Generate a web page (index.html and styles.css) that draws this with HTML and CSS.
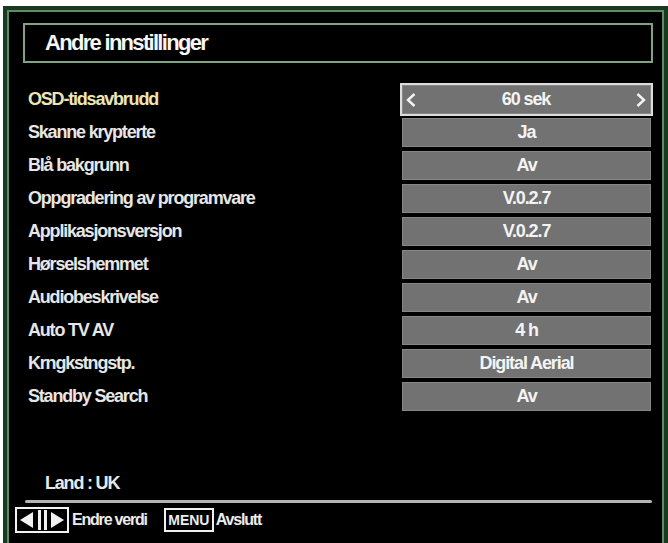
FILE: index.html
```html
<!DOCTYPE html>
<html lang="no">
<head>
<meta charset="utf-8">
<title>Andre innstillinger</title>
<link rel="stylesheet" href="styles.css">
</head>
<body>
<div class="tv">
  <div class="title">Andre innstillinger</div>
  <ul class="list">
    <li class="row sel">
      <span class="label">OSD-tidsavbrudd</span>
      <span class="val">
        <svg class="chev" width="10" height="14" viewBox="0 0 10 14"><polyline points="8.5,1 2,7 8.5,13" fill="none" stroke="#f4f4f4" stroke-width="2.4"/></svg>
        <span class="vtext">60 sek</span>
        <svg class="chev" width="10" height="14" viewBox="0 0 10 14"><polyline points="1.5,1 8,7 1.5,13" fill="none" stroke="#f4f4f4" stroke-width="2.4"/></svg>
      </span>
    </li>
    <li class="row"><span class="label">Skanne krypterte</span><span class="val">Ja</span></li>
    <li class="row"><span class="label">Blå bakgrunn</span><span class="val">Av</span></li>
    <li class="row"><span class="label">Oppgradering av programvare</span><span class="val">V.0.2.7</span></li>
    <li class="row"><span class="label">Applikasjonsversjon</span><span class="val">V.0.2.7</span></li>
    <li class="row"><span class="label">Hørselshemmet</span><span class="val">Av</span></li>
    <li class="row"><span class="label">Audiobeskrivelse</span><span class="val">Av</span></li>
    <li class="row"><span class="label">Auto TV AV</span><span class="val">4 h</span></li>
    <li class="row"><span class="label">Krngkstngstp.</span><span class="val">Digital Aerial</span></li>
    <li class="row"><span class="label">Standby Search</span><span class="val">Av</span></li>
  </ul>
  <div class="land">Land : UK</div>
  <div class="sep"></div>
  <div class="foot">
    <svg class="keys" width="54" height="26" viewBox="0 0 54 26">
      <rect x="1" y="1" width="52" height="24" fill="none" stroke="#f2f2f2" stroke-width="2"/>
      <polygon points="5,13 18,5 18,21" fill="#f2f2f2"/>
      <rect x="23" y="3" width="3" height="20" fill="#f2f2f2"/>
      <rect x="29" y="3" width="3" height="20" fill="#f2f2f2"/>
      <polygon points="49,13 36,5 36,21" fill="#f2f2f2"/>
    </svg>
    <span class="ftext">Endre verdi</span>
    <span class="menu">MENU</span>
    <span class="ftext">Avslutt</span>
  </div>
</div>
</body>
</html>
```
FILE: styles.css
```css
html, body {
  margin: 0;
  padding: 0;
  background: #ffffff;
  overflow: hidden;
}
body {
  width: 668px;
  height: 543px;
  font-family: "Liberation Sans", Arial, sans-serif;
  font-weight: bold;
}
.tv {
  margin: 6px 0 0 3px;
  width: 665px;
  height: 560px;
  box-sizing: border-box;
  background: #000;
  border: 4px solid #1a3a20;
  box-shadow: inset 0 0 0 2px #5c8e62;
  display: flex;
  flex-direction: column;
  align-items: flex-start;
}
.title {
  margin: 13px 0 0 16px;
  width: 630px;
  height: 40px;
  box-sizing: border-box;
  border: 2px solid #7fa383;
  color: #f6f6f6;
  font-size: 22px;
  letter-spacing: -1.7px;
  line-height: 36px;
  padding-left: 20px;
}
.list {
  list-style: none;
  margin: 20px 0 0 0;
  padding: 0;
}
.row {
  height: 33px;
  display: flex;
  align-items: center;
}
.label {
  width: 374px;
  margin-left: 21px;
  color: #e6e6e6;
  font-size: 18px;
  letter-spacing: -1.2px;
}
.sel .label {
  color: #ece6b4;
}
.val {
  width: 249px;
  height: 29px;
  box-sizing: border-box;
  background: #727272;
  border: 1px solid #868686;
  color: #f4f4f4;
  font-size: 18px;
  letter-spacing: -1.1px;
  display: flex;
  align-items: center;
  justify-content: center;
}
.sel .val {
  outline: 2px solid #dcdcdc;
  justify-content: space-between;
  padding: 0 4px 0 3px;
}
.chev {
  display: block;
}
.land {
  margin: 59px 0 0 38px;
  color: #e8e8e8;
  font-size: 18px;
  letter-spacing: -1.2px;
  line-height: 22px;
}
.sep {
  margin: 6px 0 0 18px;
  width: 627px;
  height: 3px;
  border-radius: 2px;
  background: #b4b4b4;
}
.foot {
  margin: 4px 0 0 8px;
  display: flex;
  align-items: center;
  color: #ececec;
  font-size: 16px;
  letter-spacing: -1.2px;
}
.keys {
  display: block;
}
.ftext {
  margin-left: 3px;
}
.menu {
  margin-left: 17px;
  width: 50px;
  height: 24px;
  box-sizing: border-box;
  border: 2px solid #f0f0f0;
  font-size: 14px;
  letter-spacing: 0;
  display: flex;
  align-items: center;
  justify-content: center;
}
.menu + .ftext {
  margin-left: 2px;
}
```
